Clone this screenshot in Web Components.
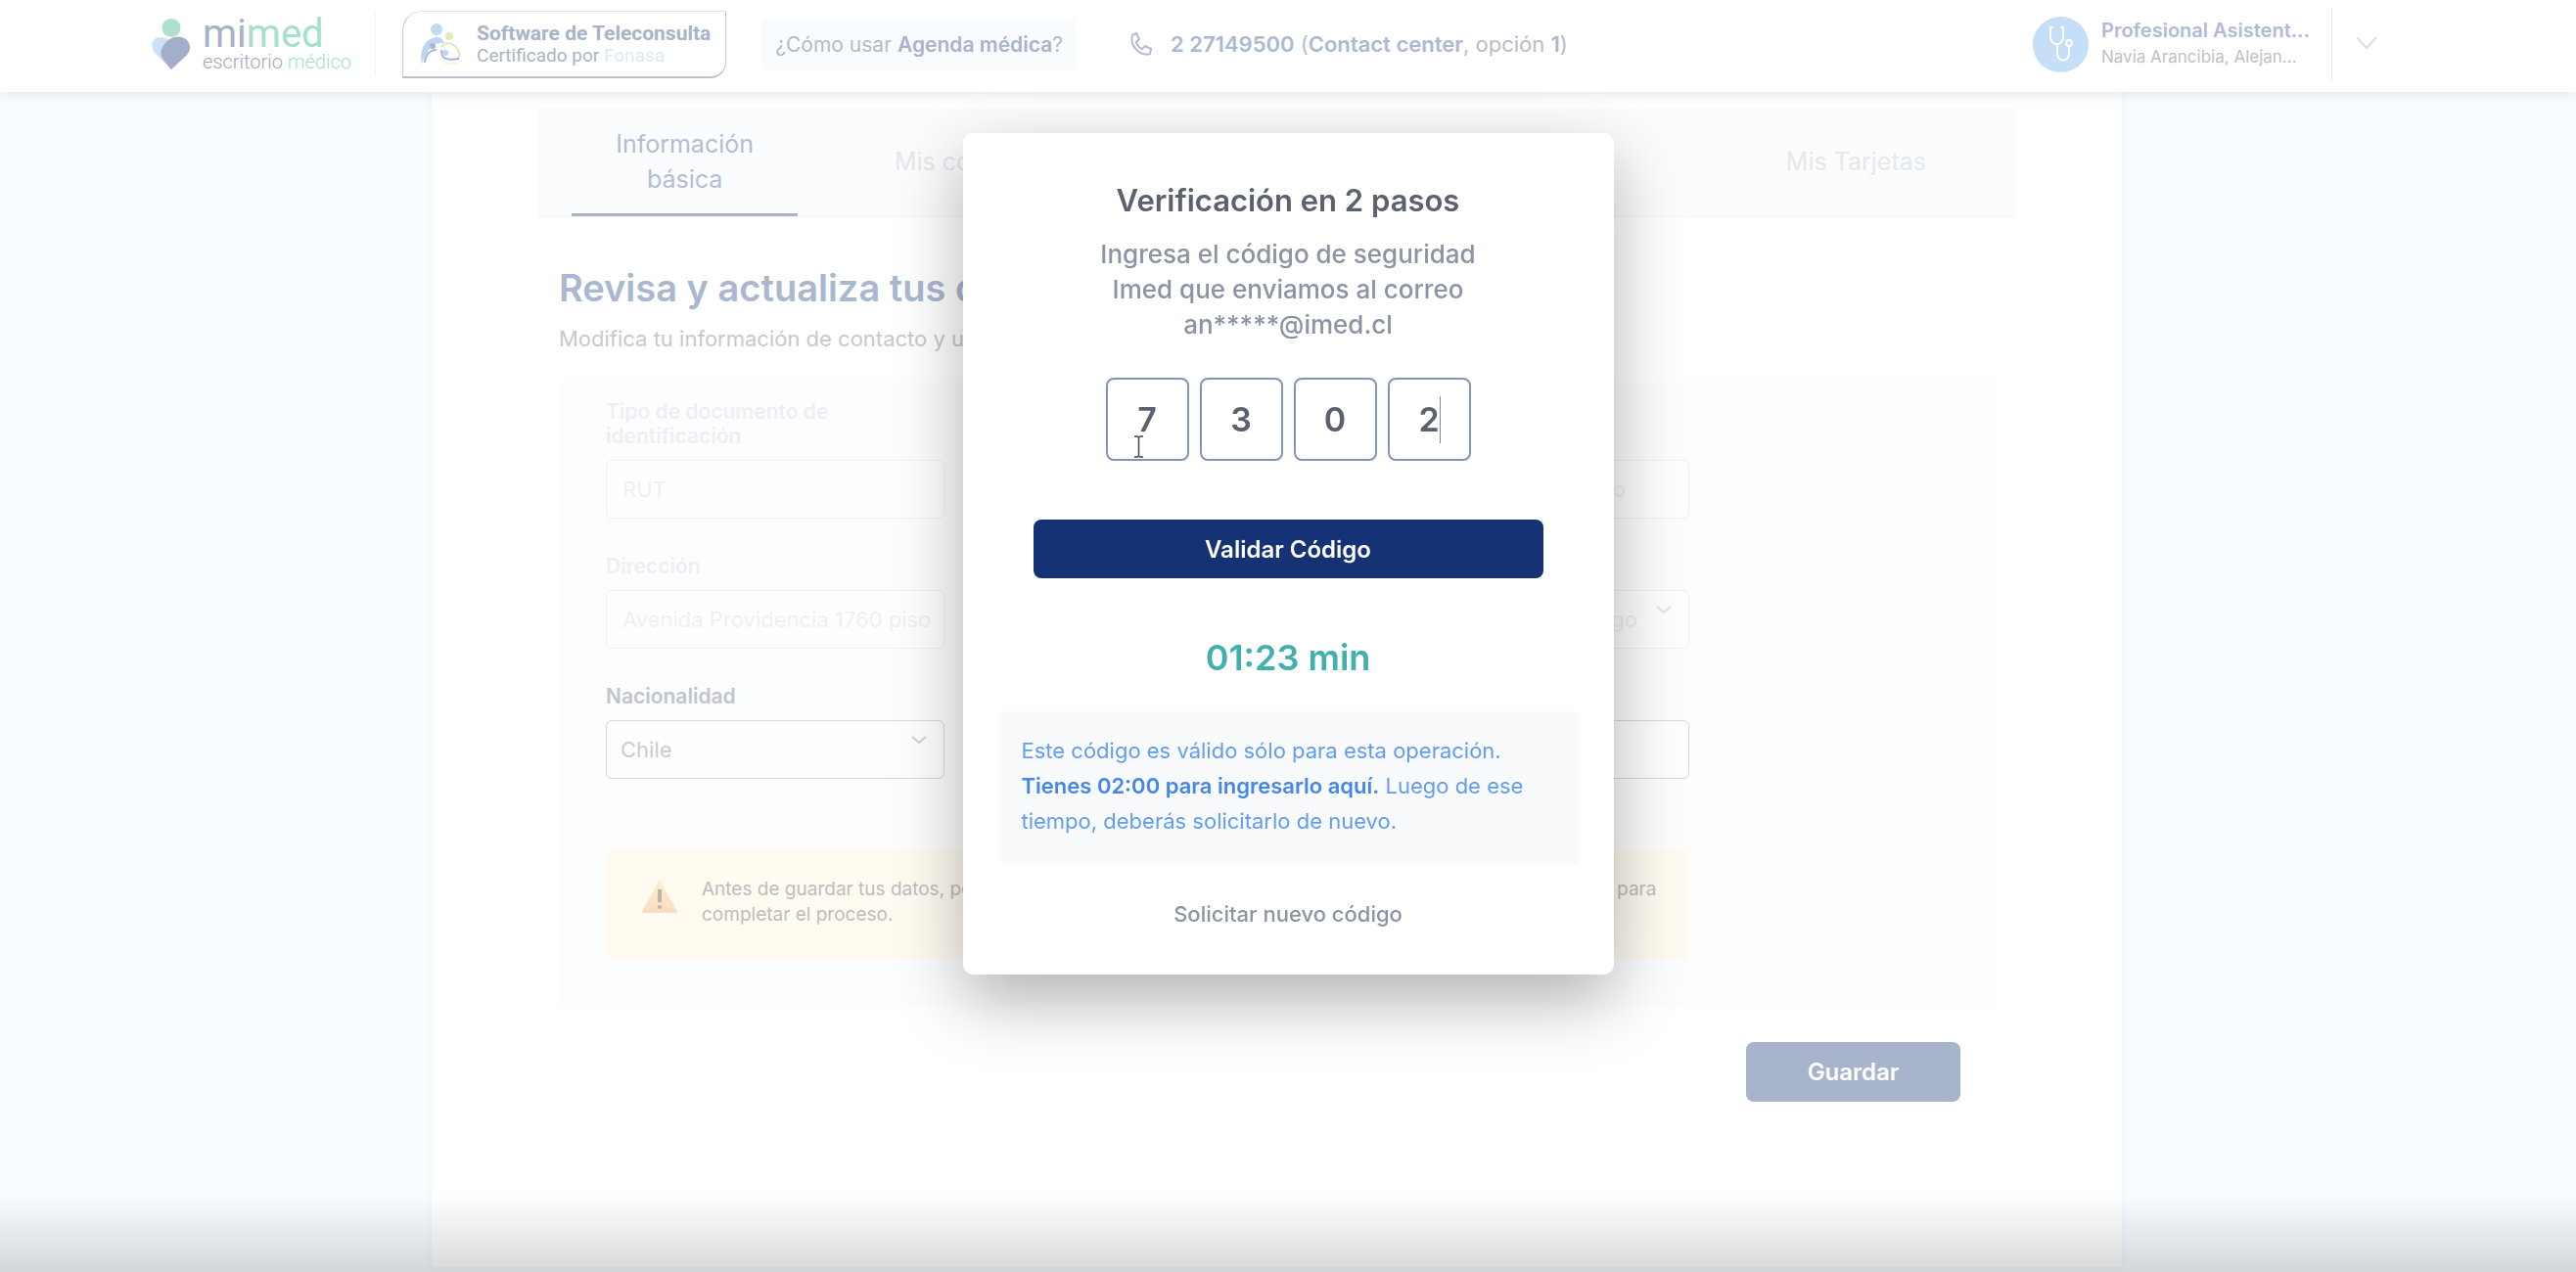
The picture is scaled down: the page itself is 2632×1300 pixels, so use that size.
<!DOCTYPE html>
<html lang="es">
<head>
<meta charset="utf-8">
<meta name="viewport" content="width=device-width, initial-scale=1">
<title>mimed - Verificación en 2 pasos</title>
<style>
    * { box-sizing: border-box; }

    body {
        --color-primary: #153374;
        --color-primary-soft: #a8b4cc;
        --color-text: #5c6170;
        --color-muted: #8b93a5;
        --color-panel: #fcfdff;

        margin: 0;
        min-height: 100vh;
        display: flex;
        flex-direction: column;
        background-color: #f9fdff;
        font-family: Inter, "Open Sans", sans-serif;
        font-size: 22px;
        color: var(--color-text);
    }
</style>
</head>
<body>

<app-header></app-header>
<profile-page></profile-page>
<verify-dialog></verify-dialog>
<bottom-fade></bottom-fade>

<script>
const make_template = (html) => {
    const template = document.createElement('template');
    template.innerHTML = `<style>* { box-sizing: border-box; }</style>` + html;
    return template;
};

class BaseComp extends HTMLElement {
    constructor() {
        super();
        this.attachShadow({ mode: 'open' });
        const deep_copy = true; // include descendants
        this.shadowRoot.appendChild(this.constructor.template.content.cloneNode(deep_copy));
    }
}

/* ---------- logo ---------- */
class AppLogo extends BaseComp {
    static template = make_template(`
        <style>
            :host {
                display: flex;
                align-items: center;
                gap: 12px;
                font-family: Roboto, sans-serif;
            }
            .words { display: flex; flex-direction: column; }
            .name { font-size: 40px; line-height: 36px; color: #a9b1c6; }
            .sub { font-size: 20px; line-height: 20px; font-weight: 300; color: #a0a7b8; }
            .green { color: #a6e0cb; }
        </style>

        <svg width="40" height="52" viewBox="0 0 40 52" aria-hidden="true">
            <ellipse cx="20" cy="9.500" rx="9.500" ry="9.500" fill="#afe0cf"/>
            <path d="M20 52 L3 35 C-2 28 0 19 9 19 C14 19 18 21 20 25 Z" fill="#d0e0f3"/>
            <path d="M20 52 L11 41 C7 34 11 27 17 22 C26 15 38 19 39 29 C39 34 37 36 34 39 Z" fill="#a3aecb"/>
        </svg>
        <div class="words">
            <span class="name">mi<span class="green">med</span></span>
            <span class="sub">escritorio <span class="green">médico</span></span>
        </div>
    `);
}
customElements.define('app-logo', AppLogo);

/* ---------- teleconsulta badge ---------- */
class CertBadge extends BaseComp {
    static template = make_template(`
        <style>
            :host {
                display: flex;
                align-items: center;
                gap: 16px;
                height: 69px;
                padding: 0 15px 0 17px;
                border: 1px solid #c3c9d6;
                border-top-color: #e0e4ee;
                border-bottom: 2px solid #bcc2cc;
                border-radius: 20px 0 16px 0;
                font-family: Roboto, sans-serif;
                color: #aab3c8;
            }
            .words { display: flex; flex-direction: column; }
            b { font-size: 21px; line-height: 24px; }
            span { font-size: 19px; line-height: 22px; }
            .light { color: #dceaf6; }
        </style>

        <svg width="42" height="42" viewBox="0 0 42 42" fill="none" aria-hidden="true">
            <circle cx="17" cy="6" r="6" fill="#c3daf3"/>
            <path d="M2 42 C-1 28 5 15 17 14 C22 14 24 17 25 20 C17 19 10 24 7 31 C5 35 3 37 2 42 Z" fill="#bcd5f1"/>
            <path d="M5 40 C6 31 11 27 17 27" stroke="#aab5d2" stroke-width="2"/>
            <circle cx="13" cy="23" r="3" fill="#aab5d2"/>
            <circle cx="30" cy="13" r="4" fill="#e6e8bd"/>
            <path d="M22 24 C26 18 37 19 40 30 L40 36" stroke="#e3e6b4" stroke-width="2"/>
            <path d="M22 27 C22 36 26 38 40 36" stroke="#aab5d2" stroke-width="2"/>
            <path d="M22 36 C23 42 34 42 38 40" stroke="#eceecf" stroke-width="1"/>
            <circle cx="26" cy="30" r="3" fill="#bcd5f1"/>
        </svg>
        <div class="words">
            <b>Software de Teleconsulta</b>
            <span>Certificado por <span class="light">Fonasa</span></span>
        </div>
    `);
}
customElements.define('cert-badge', CertBadge);

/* ---------- user block ---------- */
class UserMenu extends BaseComp {
    static template = make_template(`
        <style>
            :host { display: flex; align-items: center; }
            .avatar {
                display: grid;
                place-items: center;
                width: 57px;
                height: 57px;
                border-radius: 50%;
                background-color: #c6dff8;
            }
            .words {
                display: flex;
                flex-direction: column;
                width: 248px;
                padding-left: 13px;
                line-height: 27px;
                white-space: nowrap;
            }
            b { font-size: 20px; font-weight: 600; color: #b0bad6; }
            .words span { font-size: 17px; color: #bfc0c4; }
            button {
                height: 76px;
                padding: 0 24px;
                border: 0;
                border-left: 1px solid #ebecef;
                background: none;
            }
        </style>

        <div class="avatar">
            <svg width="24" height="36" viewBox="0 0 24 36" fill="none" stroke="#fff" stroke-width="2" stroke-linecap="round" aria-hidden="true">
                <path d="M3 1 H1 V10 C1 21 14 21 14 10 V1 H12"/>
                <path d="M8 18 V27 C8 37 20 37 20 27 V20"/>
                <circle cx="20" cy="17" r="3"/>
            </svg>
        </div>
        <div class="words">
            <b>Profesional Asistent...</b>
            <span>Navia Arancibia, Alejan...</span>
        </div>
        <button type="button" aria-label="Abrir menú">
            <svg width="22" height="14" viewBox="0 0 22 14" fill="none" stroke="#dcdddf" stroke-width="2" aria-hidden="true"><path d="M1 1 L11 12 L21 1"/></svg>
        </button>
    `);
}
customElements.define('user-menu', UserMenu);

/* ---------- header ---------- */
class AppHeader extends BaseComp {
    static template = make_template(`
        <style>
            :host {
                display: flex;
                align-items: center;
                height: 94px;
                padding: 0 179px 4px 155px;
                background-color: #fff;
                box-shadow: 0 2px 12px rgba(0, 0, 0, .1);
                position: relative;
                z-index: 1;
                white-space: nowrap;
            }
            .line { width: 1px; height: 64px; margin: 0 27px 0 24px; background-color: #f2f3f5; }
            .help {
                display: flex;
                align-items: center;
                height: 52px;
                margin-left: 37px;
                padding: 0 13px;
                background-color: #f9fcff;
                font-size: 21px;
                color: #b5bac8;
                text-decoration: none;
            }
            b { font-weight: 600; }
            .help b { color: #a9b3c9; }
            .phone {
                display: flex;
                align-items: center;
                gap: 19px;
                margin-left: 56px;
                color: #b5bccb;
                text-decoration: none;
            }
            .phone b { color: #acb9d1; }
            user-menu { margin-left: auto; }
        </style>

        <app-logo></app-logo>
        <div class="line"></div>
        <cert-badge></cert-badge>
        <a class="help" href="#ayuda"><span>¿Cómo usar <b>Agenda médica</b>?</span></a>
        <a class="phone" href="tel:227149500">
            <svg width="22" height="24" viewBox="0 0 22 24" fill="none" stroke="#b3bdd0" stroke-width="2" stroke-linejoin="round" aria-hidden="true">
                <path d="M2 3 L6 1 L9 7 L6 10 C7 14 9 16 12 17 L15 14 L21 17 L20 22 C10 25 -1 14 2 3 Z"/>
            </svg>
            <span><b>2 27149500</b> (<b>Contact center</b>, opción <b>1</b>)</span>
        </a>
        <user-menu></user-menu>
    `);
}
customElements.define('app-header', AppHeader);

/* ---------- tabs ---------- */
class TabBar extends BaseComp {
    static template = make_template(`
        <style>
            :host {
                display: grid;
                grid-template-columns: repeat(5, 1fr);
                height: 111px;
                padding-right: 15px;
                border-bottom: 1px solid #f4f5f9;
                background-color: #fbfcfe;
            }
        </style>
        <slot></slot>
    `);
}
customElements.define('tab-bar', TabBar);

class TabItem extends BaseComp {
    static template = make_template(`
        <style>
            :host { display: flex; padding: 0 34px; }
            button {
                flex: 1;
                padding: 0 20px;
                border: 0;
                border-bottom: 3px solid transparent;
                background: none;
                font: inherit;
                font-size: 25px;
                line-height: 36px;
                color: #e6e7ea;
            }
            :host([active]) button { color: #b1bed3; border-bottom-color: #a9b3ca; }
        </style>
        <button type="button"><slot></slot></button>
    `);
}
customElements.define('tab-item', TabItem);

/* ---------- form field (input or select) ---------- */
class FormField extends BaseComp {
    static template = make_template(`
        <style>
            :host {
                --field-line: #f0f1f4;
                --field-text: #eff0f3;
                --field-label: #edeff3;
                --field-arrow: #e2e4e7;
                display: flex;
                flex-direction: column;
                justify-content: flex-end;
                gap: 12px;
            }
            :host([enabled]) {
                --field-line: #d3d6da;
                --field-text: #c9ccd2;
                --field-label: #c1c5cb;
                --field-arrow: #cfd1d5;
            }
            label { font-size: 21px; line-height: 25px; font-weight: 600; color: var(--field-label); }
            label:empty { display: none; }
            .box { display: grid; align-items: center; }
            .box > * { grid-area: 1 / 1; }
            input, select {
                appearance: none;
                width: 100%;
                height: 60px;
                padding: 0 4px 0 16px;
                border: 1px solid var(--field-line);
                border-radius: 6px;
                background-color: #fefeff;
                font: inherit;
                color: var(--field-text);
                opacity: 1;
            }
            select { padding: 0 14px; }
            :host([end]) input { text-align: right; padding-right: 64px; }
            :host([end]) select { text-align-last: right; padding-right: 52px; }
            svg { justify-self: end; margin: 0 18px 20px 0; stroke: var(--field-arrow); pointer-events: none; }
        </style>
        <label for="control"></label>
        <div class="box"></div>
    `);

    connectedCallback() {
        const label = this.shadowRoot.querySelector('label');
        const box = this.shadowRoot.querySelector('.box');
        const value = this.getAttribute('value') || '';
        const text = this.getAttribute('label');

        if (this.hasAttribute('select')) {
            box.innerHTML = `
                <select id="control"><option>${value}</option></select>
                <svg width="16" height="9" viewBox="0 0 16 9" fill="none" stroke-width="2" aria-hidden="true"><path d="M1 1 L8 7 L15 1"/></svg>
            `;
        } else {
            box.innerHTML = `<input id="control" type="text" value="${value}">`;
        }

        const control = box.querySelector('#control');
        control.disabled = !this.hasAttribute('enabled');
        if (text) label.innerText = text;
        else control.setAttribute('aria-label', this.getAttribute('name'));
    }
}
customElements.define('form-field', FormField);

/* ---------- yellow note ---------- */
class WarningNote extends BaseComp {
    static template = make_template(`
        <style>
            :host {
                display: flex;
                gap: 25px;
                height: 113px;
                padding: 29px 0 0 37px;
                background-color: #fffbf1;
                font-size: 19px;
                line-height: 26px;
                color: #bebdbd;
            }
            svg { flex: none; margin-top: 4px; }
        </style>
        <svg width="36" height="33" viewBox="0 0 36 33" aria-hidden="true">
            <defs>
                <linearGradient id="warm" x1="0" y1="0" x2="0" y2="1">
                    <stop offset="0" stop-color="#fbeecb"/>
                    <stop offset="1" stop-color="#fbdcc0"/>
                </linearGradient>
            </defs>
            <path d="M18 1 L35 32 H1 Z" fill="url(#warm)" stroke="url(#warm)" stroke-width="2" stroke-linejoin="round"/>
            <path d="M18 9 V22" stroke="#bab4ab" stroke-width="4"/>
            <circle cx="18" cy="27" r="2" fill="#bab4ab"/>
        </svg>
        <span><slot></slot></span>
    `);
}
customElements.define('warning-note', WarningNote);

/* ---------- page behind the dialog ---------- */
class ProfilePage extends BaseComp {
    static template = make_template(`
        <style>
            :host { display: flex; flex: 1; padding: 0 464px 5px 441px; }
            main {
                flex: 1;
                min-width: 0;
                padding: 17px 107px 0 109px;
                background-color: #fff;
                box-shadow: 0 0 8px rgba(80, 80, 160, .06);
            }
            section { display: flex; flex-direction: column; padding: 48px 21px 0; }
            h1 {
                margin: 0;
                font-size: 38px;
                line-height: 48px;
                font-weight: 600;
                color: #a9b7cf;
            }
            p { margin: 13px 0 29px; line-height: 30px; color: #c8c8cb; }
            form {
                display: grid;
                grid-template-columns: repeat(3, 1fr);
                gap: 36px 34px;
                padding: 18px 314px 50px 48px;
                background-color: var(--color-panel);
            }
            form-field[end] { grid-column: 3; }
            warning-note { grid-column: 1 / -1; margin-top: 35px; }
            .save {
                align-self: flex-end;
                width: 219px;
                height: 61px;
                margin: 35px 37px 0 0;
                border: 0;
                border-radius: 8px;
                background-color: var(--color-primary-soft);
                font: inherit;
                font-size: 24px;
                font-weight: 600;
                color: #fff;
            }
        </style>

        <main>
            <tab-bar>
                <tab-item active>Información básica</tab-item>
                <tab-item>Mis convenios</tab-item>
                <tab-item></tab-item>
                <tab-item></tab-item>
                <tab-item>Mis Tarjetas</tab-item>
            </tab-bar>
            <section>
                <h1>Revisa y actualiza tus datos</h1>
                <p>Modifica tu información de contacto y ubicación</p>
                <form>
                    <form-field label="Tipo de documento de identificación" value="RUT"></form-field>
                    <form-field end name="Nombre" value="Alejandro"></form-field>
                    <form-field label="Dirección" value="Avenida Providencia 1760 piso"></form-field>
                    <form-field end select name="Ciudad" value="Santiago"></form-field>
                    <form-field enabled select label="Nacionalidad" value="Chile"></form-field>
                    <form-field enabled end name="Teléfono"></form-field>
                    <warning-note>Antes de guardar tus datos, por favor verifica que toda la información ingresada esté correcta y vigente para<br>completar el proceso.</warning-note>
                </form>
                <button class="save" type="button">Guardar</button>
            </section>
        </main>
    `);
}
customElements.define('profile-page', ProfilePage);

/* ---------- 4 digit code ---------- */
class CodeInput extends BaseComp {
    static template = make_template(`
        <style>
            :host { display: flex; justify-content: center; gap: 11px; position: relative; }
            input {
                width: 85px;
                height: 85px;
                padding: 0;
                border: 2px solid #8394b8;
                border-radius: 8px;
                background-color: #fff;
                font: inherit;
                font-size: 34px;
                font-weight: 600;
                text-align: center;
                color: var(--color-text);
            }
            /* text caret and mouse pointer lie over the boxes */
            .caret {
                position: absolute;
                top: 19px;
                left: 50%;
                width: 1px;
                height: 48px;
                margin-left: 155px;
                background-color: #85888f;
            }
            svg { position: absolute; top: 59px; left: 50%; margin-left: -158px; }
        </style>
    `);

    connectedCallback() {
        const digits = this.getAttribute('value').split('');
        digits.forEach((digit, i) => {
            const input = document.createElement('input');
            input.type = 'text';
            input.inputMode = 'numeric';
            input.maxLength = 1;
            input.setAttribute('value', digit);
            input.setAttribute('aria-label', `Dígito ${i + 1}`);
            this.shadowRoot.appendChild(input);
        });
        this.shadowRoot.appendChild(document.createElement('div')).className = 'caret';
        this.shadowRoot.lastChild.insertAdjacentHTML('afterend', `
            <svg width="11" height="23" viewBox="0 0 11 23" fill="none" stroke="#444" stroke-width="1.500" aria-hidden="true">
                <path d="M1 1 H4 L5.500 2 L7 1 H10 M5.500 2 V21 M1 22 H4 L5.500 21 L7 22 H10"/>
            </svg>
        `);
    }
}
customElements.define('code-input', CodeInput);

/* ---------- dialog ---------- */
class VerifyDialog extends BaseComp {
    static template = make_template(`
        <style>
            :host {
                position: fixed;
                inset: 0;
                z-index: 2;
                display: flex;
                justify-content: center;
                align-items: flex-start;
                padding-top: 136px;
            }
            .dialog {
                display: flex;
                flex-direction: column;
                width: 665px;
                padding: 51px 36px 44px;
                border-radius: 10px;
                background-color: #fff;
                box-shadow: 0 26px 70px rgba(0, 0, 0, .3);
                text-align: center;
            }
            h2 { margin: 0; font-size: 31px; line-height: 36px; font-weight: 600; }
            .lead {
                margin: 19px auto 36px;
                font-size: 26px;
                line-height: 36px;
                font-weight: 500;
                color: var(--color-muted);
            }
            .submit {
                height: 60px;
                margin: 60px 36px 0;
                border: 0;
                border-radius: 8px;
                background-color: var(--color-primary);
                font: inherit;
                font-size: 24px;
                font-weight: 600;
                color: #fff;
            }
            time { margin: 61px 0 35px; font-size: 36px; line-height: 40px; font-weight: 600; color: #42b0ac; }
            .info {
                margin: 0;
                padding: 22px 0 26px 24px;
                border-radius: 6px;
                background-color: #f9fafc;
                line-height: 36px;
                text-align: left;
                color: #629df0;
            }
            .info b { font-weight: 600; color: #4586e8; }
            a {
                margin-top: 33px;
                line-height: 36px;
                font-weight: 500;
                color: var(--color-muted);
                text-decoration: none;
            }
        </style>

        <div class="dialog" role="dialog" aria-label="Verificación en 2 pasos">
            <h2>Verificación en 2 pasos</h2>
            <p class="lead">Ingresa el código de seguridad<br>Imed que enviamos al correo<br>an*****@imed.cl</p>
            <code-input value="7302"></code-input>
            <button class="submit" type="button">Validar Código</button>
            <time>01:23 min</time>
            <p class="info">Este código es válido sólo para esta operación.<br><b>Tienes 02:00 para ingresarlo aquí.</b> Luego de ese<br>tiempo, deberás solicitarlo de nuevo.</p>
            <a href="#nuevo">Solicitar nuevo código</a>
        </div>
    `);
}
customElements.define('verify-dialog', VerifyDialog);

/* ---------- grey fade along the bottom edge ---------- */
class BottomFade extends BaseComp {
    static template = make_template(`
        <style>
            :host {
                position: fixed;
                inset: auto 0 0 0;
                z-index: 3;
                height: 80px;
                background-image: linear-gradient(rgba(0, 0, 0, 0), rgba(0, 0, 0, .15));
                pointer-events: none;
            }
        </style>
    `);
}
customElements.define('bottom-fade', BottomFade);
</script>
</body>
</html>
